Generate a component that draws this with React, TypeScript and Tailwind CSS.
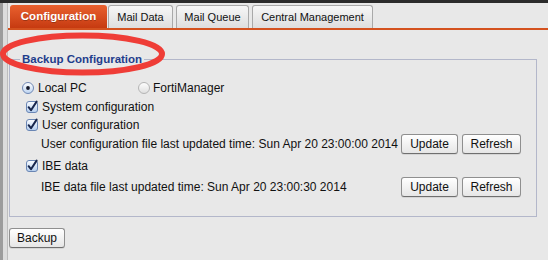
import React from 'react';

const Checkbox = () => (
  <svg width="12" height="12" viewBox="0 0 12 12" className="overflow-visible shrink-0">
    <defs>
      <linearGradient id="cbg" x1="0" y1="0" x2="0" y2="1">
        <stop offset="0" stopColor="#fbfdff" />
        <stop offset="1" stopColor="#b3cdee" />
      </linearGradient>
    </defs>
    <rect x="0.5" y="0.5" width="11" height="11" rx="2.5" fill="url(#cbg)" stroke="#6a86b4" />
    <path d="M2.6 6.2 L5 9.2 L10.6 0.6" fill="none" stroke="#17264d" strokeWidth="2" strokeLinecap="round" strokeLinejoin="round" />
  </svg>
);

const Radio = ({ checked }: { checked?: boolean }) => (
  <svg width="12" height="12" viewBox="0 0 12 12" className="shrink-0">
    <defs>
      <linearGradient id="rbOn" x1="0" y1="0" x2="0" y2="1">
        <stop offset="0" stopColor="#ffffff" />
        <stop offset="1" stopColor="#bcd3f0" />
      </linearGradient>
      <linearGradient id="rbOff" x1="0" y1="0" x2="0" y2="1">
        <stop offset="0" stopColor="#ffffff" />
        <stop offset="1" stopColor="#dedede" />
      </linearGradient>
    </defs>
    <circle cx="6" cy="6" r="5.5" fill={checked ? 'url(#rbOn)' : 'url(#rbOff)'} stroke={checked ? '#7088b4' : '#b4b4b4'} />
    {checked && <circle cx="6" cy="6" r="1.9" fill="#15182a" />}
  </svg>
);

const Button = ({ label, width }: { label: string; width: string }) => (
  <button
    className={`${width} h-[20px] rounded-[3px] border border-[#8f8f8f] border-b-[#6f6f6f] bg-gradient-to-b from-white to-[#e6e6e6] text-[12px] text-[#111] leading-none shadow-[0_1px_0_rgba(0,0,0,0.08)] flex items-center justify-center`}
  >
    {label}
  </button>
);

const tabs = [
  { label: 'Mail Data', cls: 'ml-[1px] w-[65px]' },
  { label: 'Mail Queue', cls: 'ml-[3px] w-[73px]' },
  { label: 'Central Management', cls: 'ml-[3px] w-[121px]' },
];

export default function App() {
  return (
    <div className="w-[548px] h-[260px] bg-[#e8e8e8] relative overflow-hidden flex flex-col font-['Liberation_Sans',Arial,sans-serif] text-[#111]">
      <div className="h-[3px] bg-[#2b2b2b] shrink-0" />
      <div className="flex flex-1">
        <div className="w-[8px] shrink-0 flex">
          <div className="w-[3px] bg-[#9c9c9c]" />
          <div className="flex-1 bg-[#dcdcdc] border-r border-[#bdbdbd]" />
        </div>
        <div className="flex-1 flex flex-col">
          <div className="flex pt-[2px] h-[25px] shrink-0">
            <div className="ml-[2px] w-[97px] h-[23px] rounded-t-[3px] bg-gradient-to-b from-[#e9602e] to-[#c63a10] flex items-center justify-center text-white font-bold text-[11.5px] [text-shadow:0_1px_0_rgba(0,0,0,0.25)]">
              Configuration
            </div>
            {tabs.map((t) => (
              <div
                key={t.label}
                className={`${t.cls} h-[23px] rounded-t-[3px] border border-b-0 border-[#a9a9a9] bg-gradient-to-b from-[#f7f7f7] to-[#dedede] flex items-center justify-center text-[11px] text-[#111]`}
              >
                {t.label}
              </div>
            ))}
          </div>
          <div className="h-[2px] bg-[#d4521f] shrink-0" />

          <fieldset className="mt-[22px] ml-[1px] w-[528px] h-[165px] border border-[#b3b7ca] pt-[12px] pr-[15px] flex flex-col">
            <legend className="ml-[10px] px-[2px] leading-[14px] text-[11.5px] font-bold text-[#1f3d8c]">
              Backup Configuration
            </legend>
            <div className="h-[20px] flex items-center pl-[12px] text-[12px]">
              <div className="w-[116px] flex items-center gap-[4px]">
                <Radio checked />
                <span>Local PC</span>
              </div>
              <div className="flex items-center gap-[3px]">
                <Radio />
                <span>FortiManager</span>
              </div>
            </div>
            <div className="h-[18px] flex items-center gap-[4px] pl-[16px] text-[12px]">
              <Checkbox />
              <span>System configuration</span>
            </div>
            <div className="h-[17px] flex items-center gap-[4px] pl-[16px] text-[12px]">
              <Checkbox />
              <span>User configuration</span>
            </div>
            <div className="h-[22px] flex items-center justify-between pl-[31px] text-[12px]">
              <span>User configuration file last updated time: Sun Apr 20 23:00:00 2014</span>
              <div className="flex gap-[4px]">
                <Button label="Update" width="w-[57px]" />
                <Button label="Refresh" width="w-[59px]" />
              </div>
            </div>
            <div className="h-[21px] flex items-center gap-[4px] pl-[16px] text-[12px]">
              <Checkbox />
              <span>IBE data</span>
            </div>
            <div className="h-[22px] flex items-center justify-between pl-[31px] text-[12px]">
              <span>IBE data file last updated time: Sun Apr 20 23:00:30 2014</span>
              <div className="flex gap-[4px]">
                <Button label="Update" width="w-[57px]" />
                <Button label="Refresh" width="w-[59px]" />
              </div>
            </div>
          </fieldset>

          <div className="mt-[11px] ml-[1px]">
            <Button label="Backup" width="w-[56px]" />
          </div>
        </div>
      </div>

      {/* red highlight drawn over the legend */}
      <svg className="absolute left-0 top-[31px] pointer-events-none" width="172" height="48" viewBox="0 0 172 48">
        <ellipse cx="82.5" cy="23" rx="79.5" ry="18.5" fill="none" stroke="#ef3d37" strokeWidth="6" />
      </svg>
    </div>
  );
}
